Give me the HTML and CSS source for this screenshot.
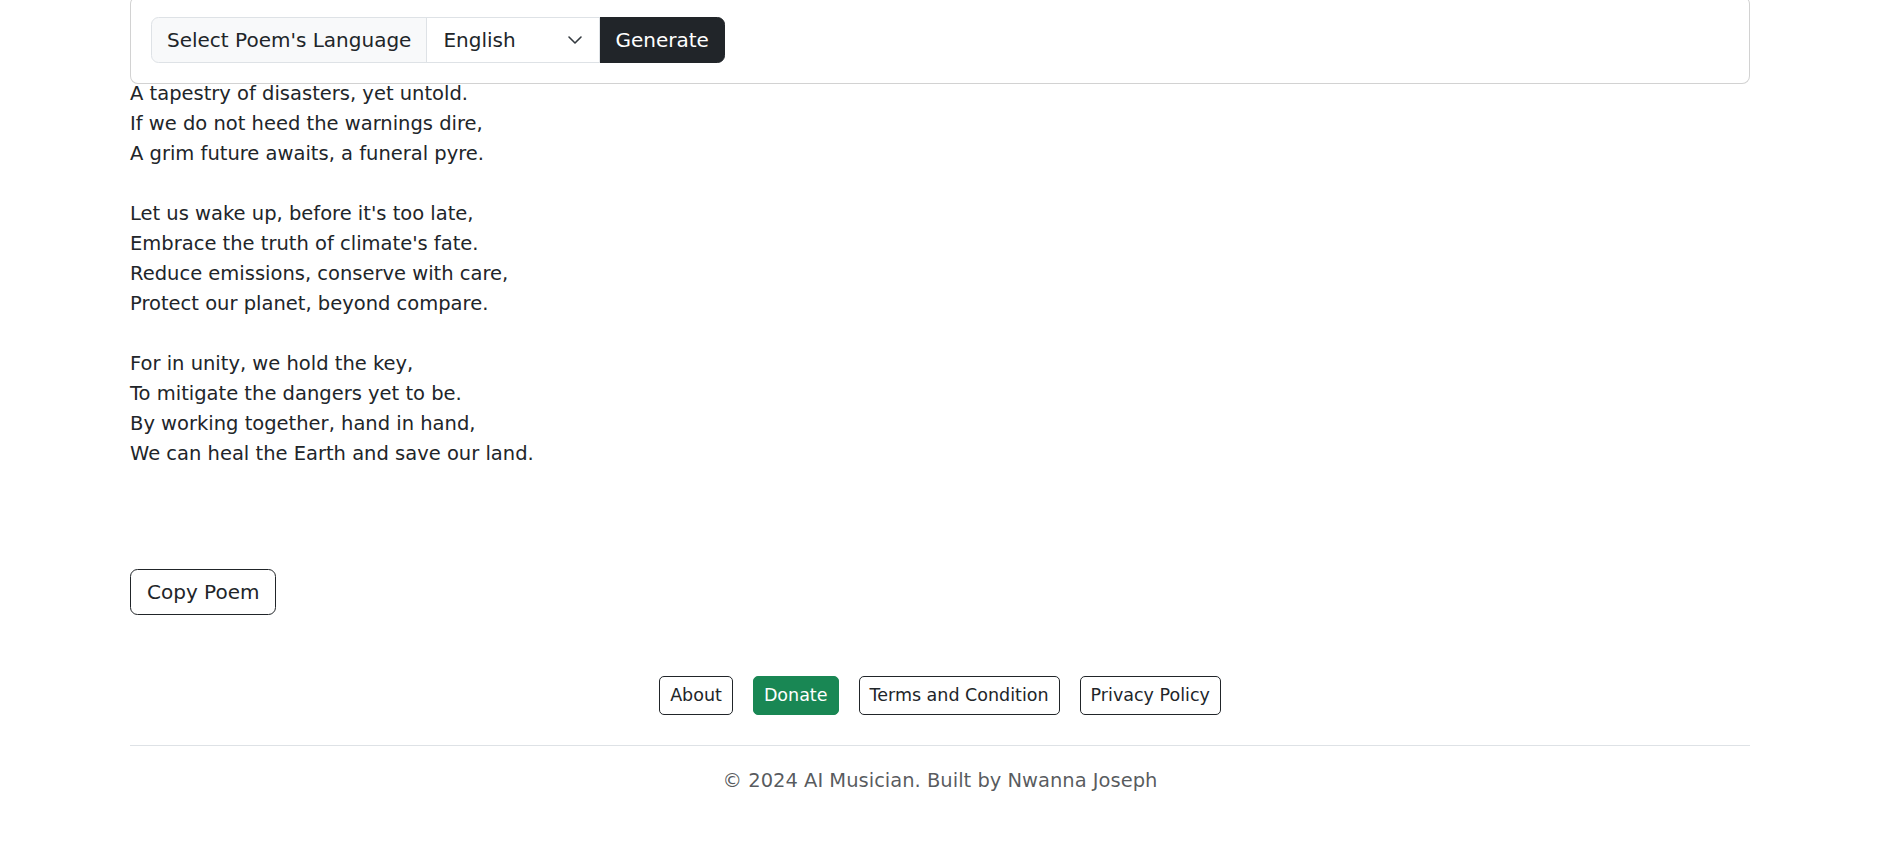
FILE: index.html
```html
<!DOCTYPE html>
<html lang="en">
<head>
    <meta charset="UTF-8">
    <meta name="viewport" content="width=device-width, initial-scale=1.0">
    <title>AI Musician - Poem Generator</title>
    <link rel="stylesheet" href="styles.css">
</head>
<body>
    <main class="container">
        <section class="prompt-card">
            <form class="input-group" onsubmit="return false;">
                <label class="group-label" for="language">Select Poem's Language</label>
                <span class="select-wrap">
                    <select id="language" class="lang-select">
                        <option selected>English</option>
                        <option>French</option>
                        <option>Spanish</option>
                        <option>Igbo</option>
                        <option>Yoruba</option>
                        <option>Hausa</option>
                    </select>
                    <svg class="chevron" viewBox="0 0 16 16" width="16" height="16" aria-hidden="true">
                        <path d="m2 5 6 6 6-6" fill="none" stroke="#343a40" stroke-width="1.6" stroke-linecap="round" stroke-linejoin="round"/>
                    </svg>
                </span>
                <button class="btn btn-dark" type="submit">Generate</button>
            </form>
        </section>

        <div class="poem" id="poem">A tapestry of disasters, yet untold.
If we do not heed the warnings dire,
A grim future awaits, a funeral pyre.

Let us wake up, before it's too late,
Embrace the truth of climate's fate.
Reduce emissions, conserve with care,
Protect our planet, beyond compare.

For in unity, we hold the key,
To mitigate the dangers yet to be.
By working together, hand in hand,
We can heal the Earth and save our land.</div>

        <button class="btn btn-outline btn-copy" onclick="copyPoem()">Copy Poem</button>

        <footer class="site-footer">
            <nav class="footer-links">
                <a href="#" class="btn btn-sm btn-outline">About</a>
                <a href="#" class="btn btn-sm btn-success">Donate</a>
                <a href="#" class="btn btn-sm btn-outline">Terms and Condition</a>
                <a href="#" class="btn btn-sm btn-outline">Privacy Policy</a>
            </nav>
            <hr class="footer-rule">
            <p class="copyright">&copy; 2024 AI Musician. Built by Nwanna Joseph</p>
        </footer>
    </main>

    <script>
        function copyPoem() {
            const text = document.getElementById('poem').innerText;
            if (navigator.clipboard) {
                navigator.clipboard.writeText(text);
            }
        }
    </script>
</body>
</html>
```

FILE: styles.css
```css
body {
    margin: 0;
    padding: 0 6px 0 0;
    font-family: "DejaVu Sans", "Noto Sans", sans-serif;
    font-size: 19.5px;
    line-height: 30px;
    color: #212529;
    background-color: #ffffff;
}
.container {
    max-width: 1620px;
    margin: 0 auto;
}

/* card with the language picker */
.prompt-card {
    margin-top: -4px;
    padding: 20px;
    border: 1px solid rgba(0, 0, 0, 0.175);
    border-radius: 8px;
    background-color: #ffffff;
}
.input-group {
    display: flex;
    align-items: stretch;
    margin: 0;
}
.group-label {
    display: flex;
    align-items: center;
    padding: 7px 15px;
    font-size: 20px;
    line-height: 30px;
    background-color: #f8f9fa;
    border: 1px solid #dee2e6;
    border-radius: 7.5px 0 0 7.5px;
}
.select-wrap {
    position: relative;
    display: flex;
    margin-left: -1px;
}
.lang-select {
    appearance: none;
    -webkit-appearance: none;
    width: 174px;
    height: 46px;
    padding: 7px 45px 7px 16px;
    font-family: inherit;
    font-size: 20px;
    line-height: 30px;
    color: #212529;
    background-color: #ffffff;
    border: 1px solid #dee2e6;
    border-radius: 0;
    outline: none;
}
.chevron {
    position: absolute;
    right: 17px;
    top: 15px;
    pointer-events: none;
}

/* buttons */
.btn {
    display: inline-block;
    padding: 7px 15px;
    font-family: inherit;
    font-size: 20px;
    line-height: 30px;
    color: #212529;
    text-decoration: none;
    background-color: transparent;
    border: 1px solid transparent;
    border-radius: 7.5px;
    cursor: pointer;
}
.btn-dark {
    margin-left: -1px;
    color: #ffffff;
    background-color: #212529;
    border-color: #212529;
    border-radius: 0 7.5px 7.5px 0;
}
.btn-outline {
    border-color: #212529;
}
.btn-outline:hover {
    color: #ffffff;
    background-color: #212529;
}
.btn-copy {
    padding: 7px 16px;
}
.btn-success {
    color: #ffffff;
    background-color: #198754;
    border-color: #198754;
}
.btn-sm {
    padding: 5px 10px;
    font-size: 17.5px;
    line-height: 26.5px;
    border-radius: 5px;
}

/* generated poem */
.poem {
    margin: -5px 0 100px;
    white-space: pre-line;
}

/* footer */
.site-footer {
    margin-top: 61px;
}
.footer-links {
    display: flex;
    justify-content: center;
    gap: 20px;
}
.footer-rule {
    margin: 30px 0 20px;
    border: 0;
    border-top: 1px solid #dee2e6;
}
.copyright {
    margin: 0;
    text-align: center;
    color: rgba(33, 37, 41, 0.75);
}
```
